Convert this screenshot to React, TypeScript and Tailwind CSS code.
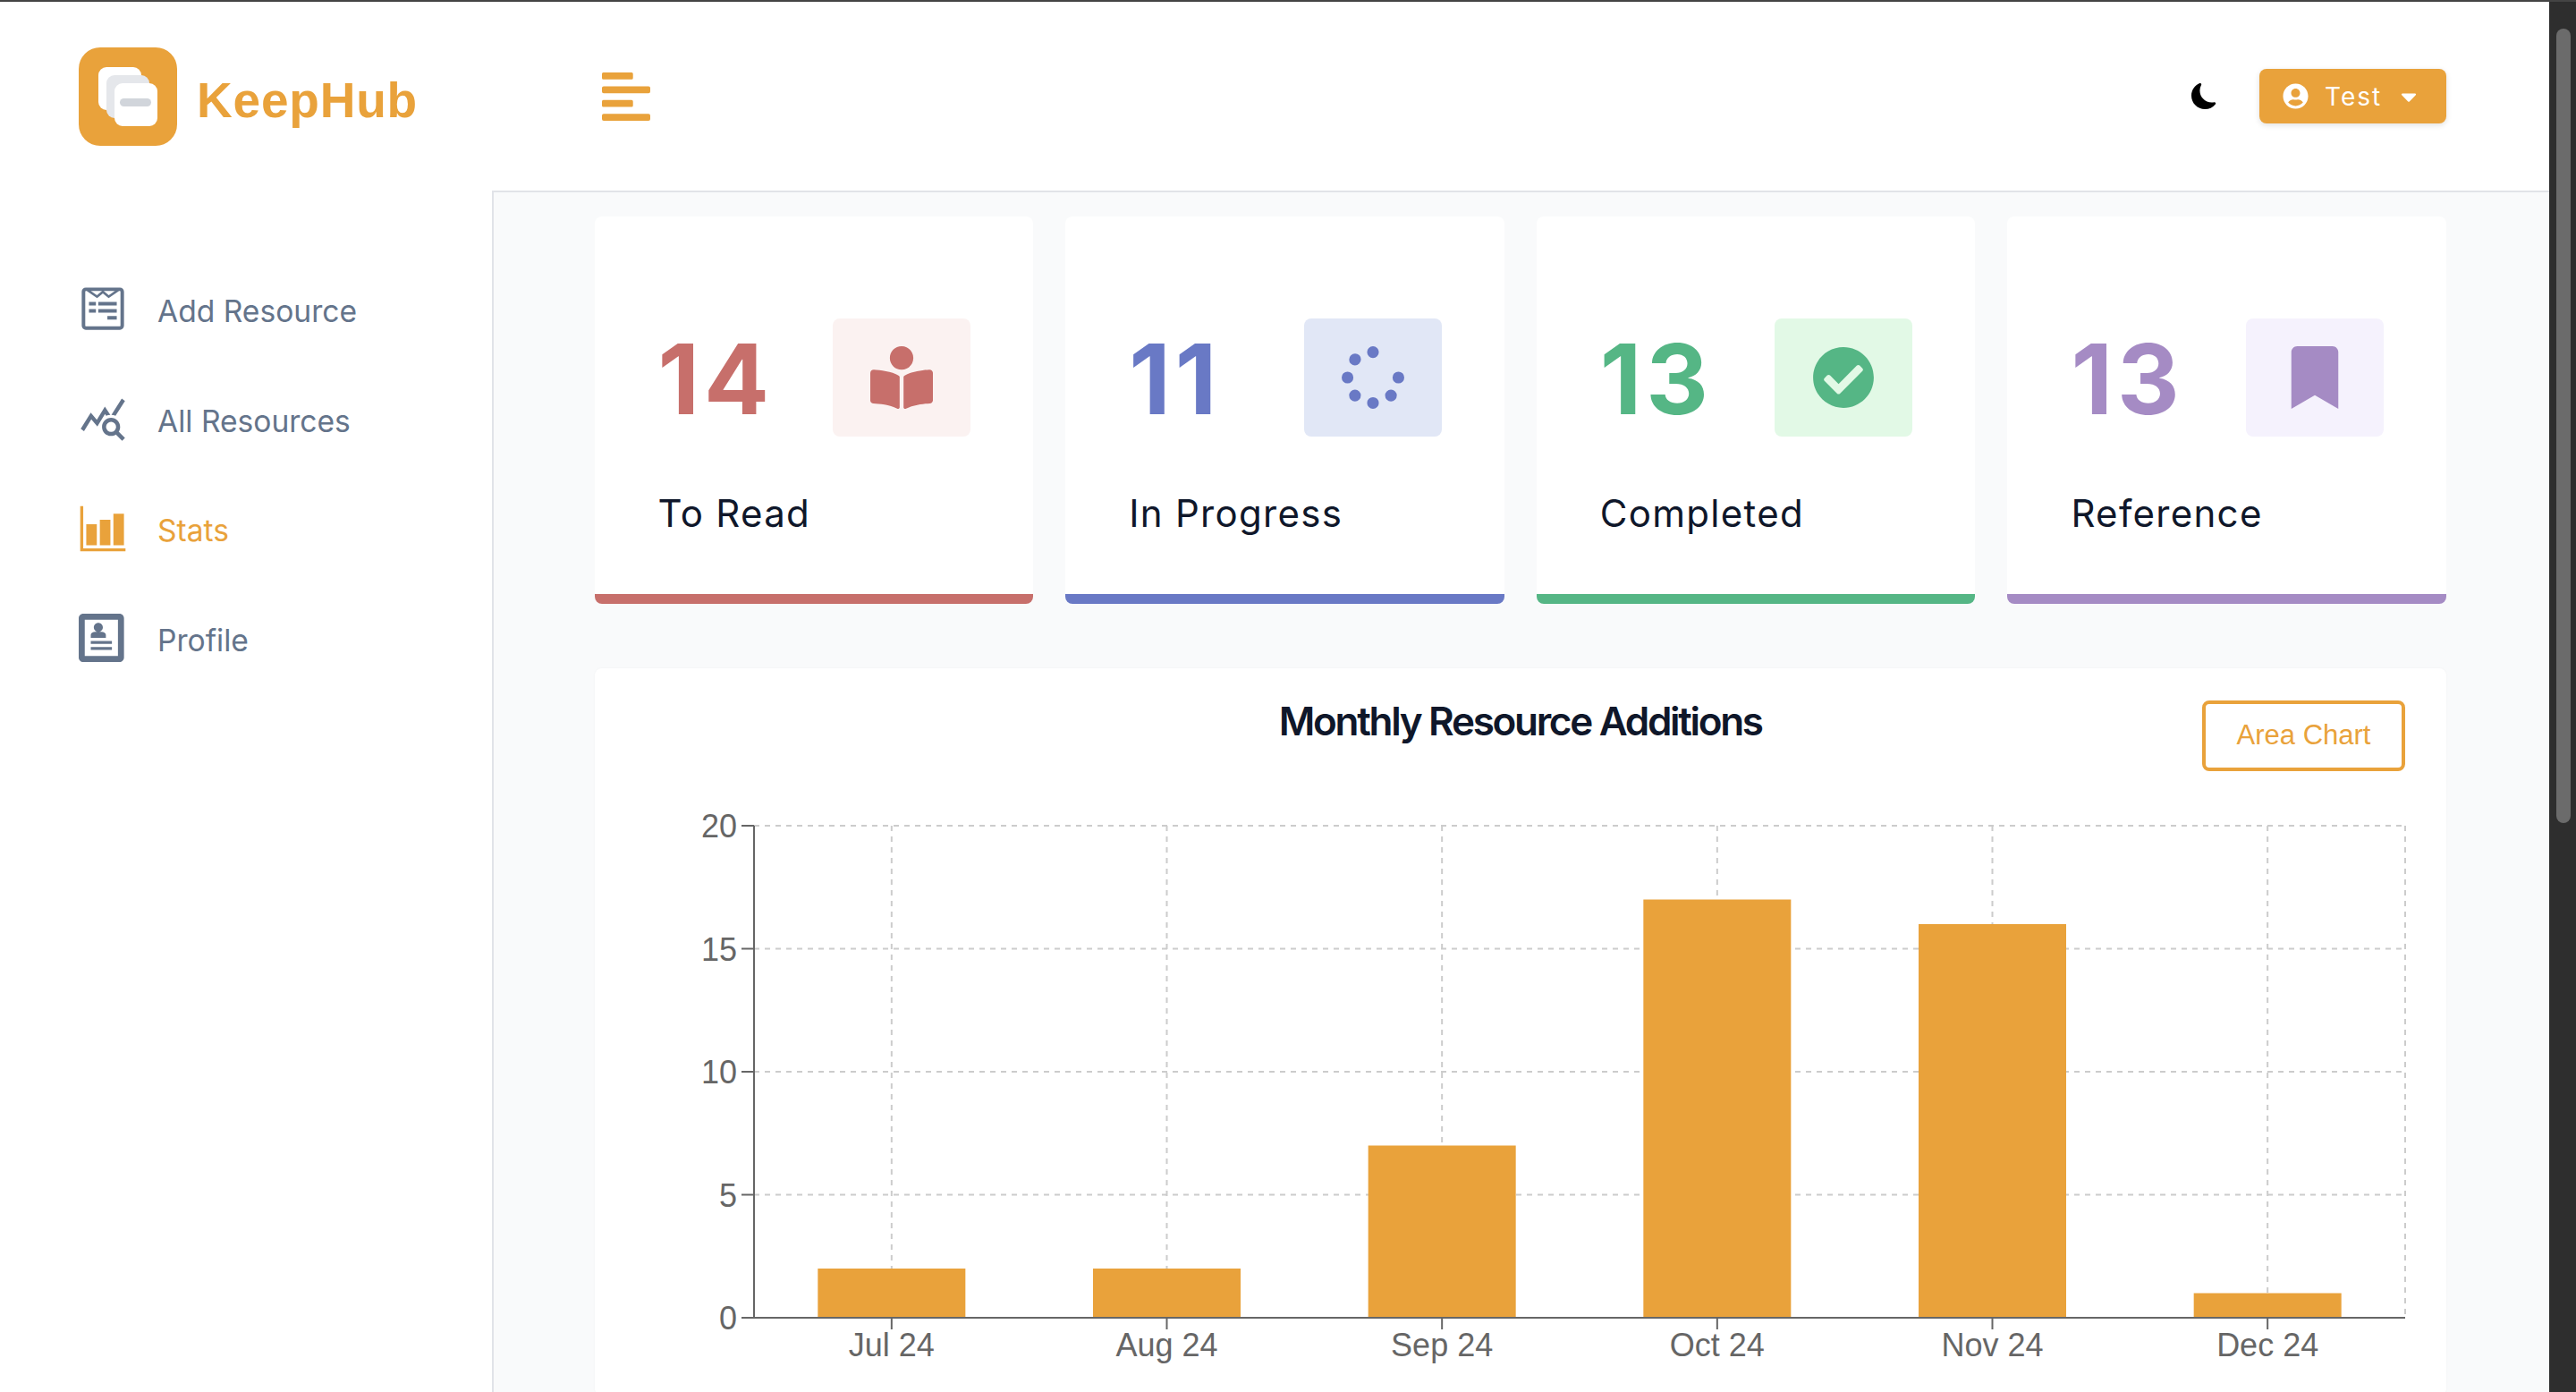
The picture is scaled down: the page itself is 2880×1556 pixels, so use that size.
import { FaBookReader, FaCaretDown, FaAlignLeft, FaCheckCircle, FaBookmark, FaUserCircle, FaWpforms } from "react-icons/fa";
import { FaSpinner } from "react-icons/fa6";
import { BsFillMoonFill } from "react-icons/bs";
import { IoBarChartSharp } from "react-icons/io5";
import { MdQueryStats } from "react-icons/md";
import { ImProfile } from "react-icons/im";

const navLinks = [
  { label: "Add Resource", icon: <FaWpforms />, active: false },
  { label: "All Resources", icon: <MdQueryStats />, active: false },
  { label: "Stats", icon: <IoBarChartSharp />, active: true },
  { label: "Profile", icon: <ImProfile />, active: false },
];

const stats = [
  { count: 14, label: "To Read", icon: <FaBookReader />, text: "text-[#c76f6b]", box: "bg-[#fbf2f1]", border: "border-[#c76f6b]" },
  { count: 11, label: "In Progress", icon: <FaSpinner />, text: "text-[#6979c5]", box: "bg-[#e1e7f6]", border: "border-[#6979c5]" },
  { count: 13, label: "Completed", icon: <FaCheckCircle />, text: "text-[#55b685]", box: "bg-[#e2f9e6]", border: "border-[#55b685]" },
  { count: 13, label: "Reference", icon: <FaBookmark />, text: "text-[#a58bc4]", box: "bg-[#f5f2fd]", border: "border-[#a58bc4]" },
];

const monthly = [
  { month: "Jul 24", count: 2 },
  { month: "Aug 24", count: 2 },
  { month: "Sep 24", count: 7 },
  { month: "Oct 24", count: 17 },
  { month: "Nov 24", count: 16 },
  { month: "Dec 24", count: 1 },
];

// chart geometry, in svg coordinates
const left = 178;
const right = 2024;
const top = 23;
const bottom = 573;
const band = (right - left) / 6;
const unit = (bottom - top) / 20;

function BarChart() {
  const ticks = [0, 5, 10, 15, 20];
  return (
    <svg width="2070" height="660" className="block font-['Liberation_Sans',sans-serif]">
      <g stroke="#ccc" strokeWidth="2" strokeDasharray="6 6">
        {ticks.map((t) => (
          <line key={t} x1={left} x2={right} y1={bottom - t * unit} y2={bottom - t * unit} />
        ))}
        {monthly.map((m, i) => (
          <line key={m.month} x1={left + band * (i + 0.5)} x2={left + band * (i + 0.5)} y1={top} y2={bottom} />
        ))}
        <line x1={right} x2={right} y1={top} y2={bottom} />
      </g>
      {monthly.map((m, i) => (
        <rect key={m.month} x={left + band * (i + 0.5) - 82.5} y={bottom - m.count * unit} width="165" height={m.count * unit} fill="#e9a23b" />
      ))}
      <g stroke="#666" strokeWidth="2">
        <line x1={left} x2={left} y1={top} y2={bottom} />
        <line x1={left} x2={right} y1={bottom} y2={bottom} />
        {ticks.map((t) => (
          <line key={t} x1={left - 14} x2={left} y1={bottom - t * unit} y2={bottom - t * unit} />
        ))}
        {monthly.map((m, i) => (
          <line key={m.month} x1={left + band * (i + 0.5)} x2={left + band * (i + 0.5)} y1={bottom} y2={bottom + 13} />
        ))}
      </g>
      <g fill="#666" fontSize="36">
        {ticks.map((t) => (
          <text key={t} x={left - 19} y={bottom - t * unit + 13} textAnchor="end">
            {t}
          </text>
        ))}
        {monthly.map((m, i) => (
          <text key={m.month} x={left + band * (i + 0.5)} y={bottom + 43} textAnchor="middle">
            {m.month}
          </text>
        ))}
      </g>
    </svg>
  );
}

function Logo() {
  return (
    <div className="flex items-center gap-[22px]">
      <div className="relative w-[110px] h-[110px] rounded-[24px] bg-[#e9a23b] shrink-0">
        <div className="absolute left-[22px] top-[22px] w-[48px] h-[48px] rounded-[9px] bg-white" />
        <div className="absolute left-[31px] top-[31px] w-[48px] h-[48px] rounded-[9px] bg-[#e5e7eb]" />
        <div className="absolute left-[40px] top-[40px] w-[48px] h-[48px] rounded-[9px] bg-white" />
        <div className="absolute left-[46px] top-[57px] w-[35px] h-[9px] rounded-full bg-[#d1d5db]" />
      </div>
      <span className="mt-[9px] text-[55px] leading-none font-bold tracking-[0.8px] text-[#e9a23b] font-['Liberation_Sans',sans-serif]">KeepHub</span>
    </div>
  );
}

function Sidebar() {
  return (
    <aside className="w-[550px] shrink-0 pt-[51px] pl-[88px]">
      <Logo />
      <nav className="mt-[124px]">
        {navLinks.map((link) => (
          <div key={link.label} className={`flex items-center h-[122.67px] text-[33.6px] ${link.active ? "text-[#e9a23b]" : "text-[#64748b]"}`}>
            <span className="flex w-[54px] mr-[34px] justify-center text-[54px] -mt-[6px]">{link.icon}</span>
            {link.label}
          </div>
        ))}
      </nav>
    </aside>
  );
}

function Header() {
  return (
    <header className="h-[211px] shrink-0 box-content border-b-2 border-[#e1e3e8] flex items-center justify-between pl-[123px] pr-[115px]">
      <FaAlignLeft className="text-[#e9a23b] w-[54px] h-[62px]" />
      <div className="flex items-center gap-[47px]">
        <BsFillMoonFill className="text-black text-[29px]" />
        <button className="flex items-center h-[61px] w-[209px] pl-[26px] rounded-[8px] bg-[#e9a23b] text-white text-[28px] tracking-[2px] shadow-[0_2px_6px_rgba(0,0,0,0.12)]">
          <FaUserCircle className="text-[29px] mr-[18px]" />
          Test
          <FaCaretDown className="text-[28px] ml-[16px]" />
        </button>
      </div>
    </header>
  );
}

function StatCard({ item }: { item: (typeof stats)[number] }) {
  return (
    <div className={`h-[433px] rounded-[8px] bg-white border-b-[11px] ${item.border} pl-[71px] pr-[72px] pt-[114px]`}>
      <div className="flex items-center justify-between">
        <span className={`pt-[4px] text-[108px] leading-none font-bold tracking-[5px] ${item.text}`}>{item.count}</span>
        <span className={`flex items-center justify-center w-[154px] h-[132px] mr-[-2px] rounded-[8px] text-[70px] ${item.box} ${item.text}`}>{item.icon}</span>
      </div>
      <div className="mt-[56px] text-[42px] leading-[60px] tracking-[1.3px] text-[#0f172a]">{item.label}</div>
    </div>
  );
}

export default function App() {
  return (
    <div className="h-[1556px] overflow-hidden bg-white font-['Inter','Noto_Sans',sans-serif]">
      <div className="h-[2px] bg-[#444]" />
      <div className="flex h-[1554px]">
        <Sidebar />
        <div className="flex-1 flex flex-col min-w-0">
          <Header />
          <main className="flex-1 bg-[#f9fafb] border-l-2 border-[#e1e3e8] pl-[112.5px] pr-[115px] pt-[27px]">
            <div className="grid grid-cols-4 gap-[36px]">
              {stats.map((item) => (
                <StatCard key={item.label} item={item} />
              ))}
            </div>
            <section className="mt-[72px] rounded-[8px] bg-white pt-[36px] shadow-[0_0_3px_rgba(0,0,0,0.04)]">
              <div className="grid grid-cols-[1fr_auto_1fr] items-start px-[46px]">
                <div />
                <h2 className="text-[44px] leading-[46px] font-semibold tracking-[-2.3px] text-[#0f172a]">Monthly Resource Additions</h2>
                <button className="justify-self-end w-[227px] h-[79px] rounded-[8px] border-4 border-[#e9a23b] text-[31px] text-[#e9a23b] font-['Liberation_Sans',sans-serif]">Area Chart</button>
              </div>
              <div className="mt-[38px]">
                <BarChart />
              </div>
            </section>
          </main>
        </div>
        <div className="w-[30px] shrink-0 bg-[#2e2e2e] pl-[8px] pt-[30px]">
          <div className="w-[16px] h-[888px] rounded-full bg-[#6b6b6b]" />
        </div>
      </div>
    </div>
  );
}
